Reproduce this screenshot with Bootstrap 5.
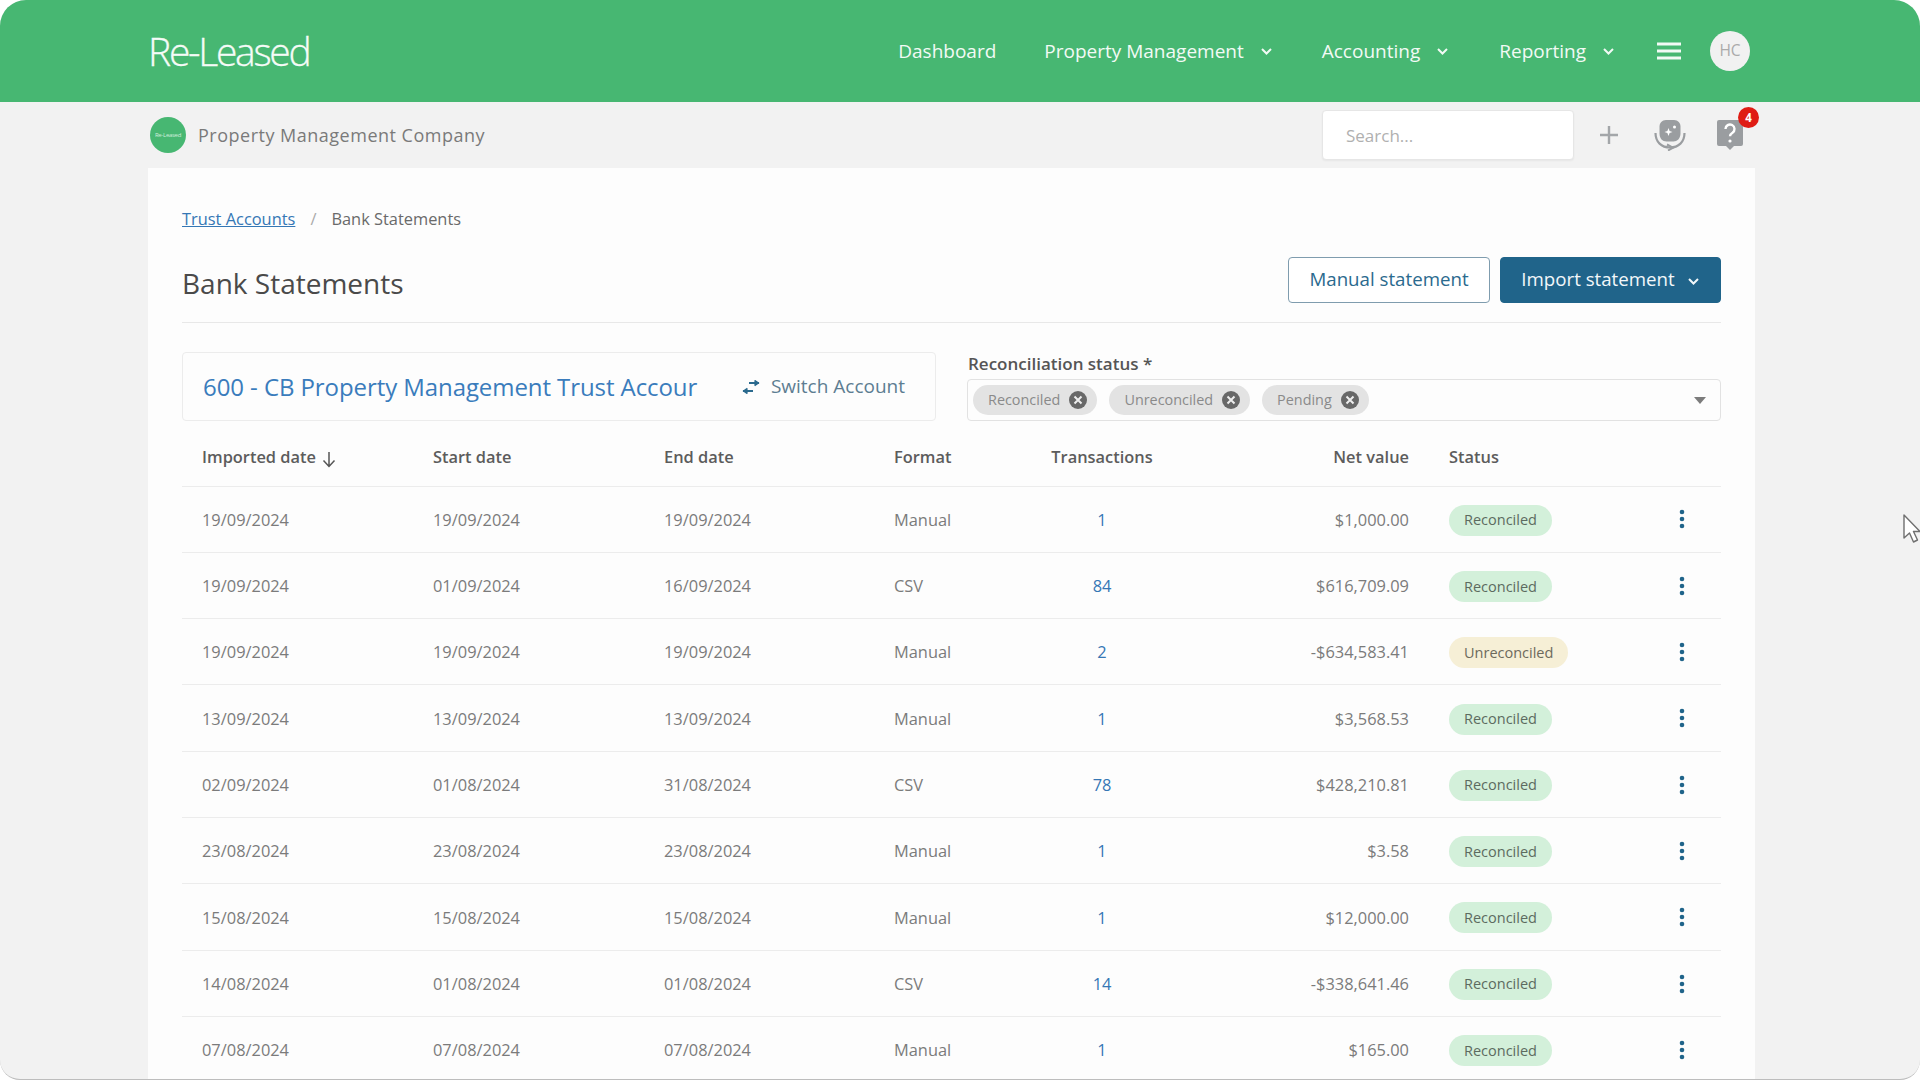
<!DOCTYPE html>
<html lang="en">
<head>
<meta charset="utf-8">
<title>Bank Statements</title>
<link href="https://cdn.jsdelivr.net/npm/bootstrap@5.3.0/dist/css/bootstrap.min.css" rel="stylesheet">
<style>
html,body{height:100%;margin:0;overflow:hidden;background:#fff;}
body{font-family:"Open Sans","Liberation Sans",sans-serif;font-size:16px;color:#777;}
.window{position:relative;height:1080px;background:#f2f2f2;border-radius:26px 26px 20px 20px;border-bottom:1px solid #bdbdbd;overflow:hidden;}
.topbar{height:102px;background:#47b772;padding:0 170px 0 148px;}
.brand{color:#f5fbf7;font-size:39px;font-weight:300;letter-spacing:-2.3px;line-height:1;margin-top:-2px;-webkit-text-stroke:.3px #f5fbf7;}
.topnav .nav-link{color:#f2faf5;font-size:19px;padding:0;display:flex;align-items:center;}
.topnav .nav-link svg{margin-left:16px;}
.nav-gap-1{margin-right:48px;}
.nav-gap-2{margin-right:49px;}
.nav-gap-3{margin-right:50px;}
.nav-gap-4{margin-right:42px;}
.nav-gap-5{margin-right:29px;}
.avatar{width:40px;height:40px;border-radius:50%;background:#f1f1f1;color:#aaa;font-size:15.5px;display:flex;align-items:center;justify-content:center;}
.subbar{height:66px;padding:0 0 0 150px;}
.org-logo{width:36px;height:36px;border-radius:50%;background:#47b772;color:#cfeedd;font-size:6px;display:flex;align-items:center;justify-content:center;letter-spacing:-.3px;margin-right:12px;}
.org-name{font-size:18px;color:#7a7a7a;letter-spacing:.5px;}
.search{width:252px;height:50px;background:#fff;border:1px solid #e6e6e6;border-radius:4px;padding:0 23px;font-size:17px;color:#aaa;box-shadow:0 1px 2px rgba(0,0,0,.05);}
.search::placeholder{color:#b0b0b0;}
.icon-plus{margin-left:24px;}
.icon-ai{margin-left:34px;}
.icon-help{position:relative;margin-left:30px;margin-right:176px;width:28px;height:32px;}
.badge-count{position:absolute;top:-12px;left:22px;width:21px;height:21px;padding:0;border-radius:50%;background:#df1c14;color:#fff;font-size:11.5px;font-weight:700;display:flex;align-items:center;justify-content:center;}
.panel{margin:0 165px 0 148px;background:#fdfdfd;padding:34px 34px 0;height:912px;}
.crumbs{--bs-breadcrumb-divider-color:#aaa;--bs-breadcrumb-item-active-color:#6a6a6a;--bs-breadcrumb-item-padding-x:15px;font-size:16.4px;margin-bottom:0;line-height:34px;}
.crumbs a{color:#3577b5;}
.head-row{margin-top:21px;height:66px;padding-bottom:20px;border-bottom:1px solid #e8e8e8;}
.head-row h1{font-size:28px;font-weight:400;color:#4a4a4a;margin:8px 0 0;}
.btn-manual{height:46px;width:202px;font-size:18.7px;color:#2b6a8e;border:1px solid #7f9cae;background:#fff;border-radius:4px;padding:0;}
.btn-import{height:46px;width:221px;margin-left:10px;font-size:18.7px;color:#f2f7fa;background:#20648a;border:1px solid #20648a;border-radius:4px;padding:0;font-weight:500;}
.btn-import svg{margin-left:12px;}
.filters{--bs-gutter-x:31px;margin-top:29px;}
.acct{height:69px;border:1px solid #ececec;border-radius:4px;padding:0 30px 0 20px;}
.acct-name{font-size:24px;color:#3a7cbc;white-space:nowrap;letter-spacing:-.08px;}
.switch{font-size:19px;color:#5d7d92;display:flex;align-items:center;gap:11px;white-space:nowrap;}
.field-label{font-size:17px;font-weight:600;color:#555;line-height:20px;margin:0 0 5px 1px;}
.select-box{height:42px;border:1px solid #e2e2e2;border-radius:4px;padding:0 14px 0 5px;gap:12px;}
.chip{height:30px;background:#e3e3e3;color:#8a8a8a;font-size:14.4px;border-radius:15px;padding:0 10px 0 15px;gap:9px;}
.chip svg{flex:none;}
.caret{margin-left:auto;width:0;height:0;border-left:6px solid transparent;border-right:6px solid transparent;border-top:7px solid #7c7c7c;}
.stmts{table-layout:fixed;width:1539px;margin:7px 0 0;--bs-table-bg:transparent;--bs-table-color:#7b7b7b;--bs-table-border-color:#ececec;font-size:16.4px;}
.stmts th{height:58px;padding:2px 0 0 20px;font-weight:600;color:#5c5c5c;vertical-align:middle;}
.stmts td{height:66.3px;padding:2px 0 0 20px;vertical-align:middle;}
.stmts .num{text-align:center;padding:2px 0 0;}
.stmts .val{text-align:right;padding:2px 20px 0 0;}
.stmts td.num{color:#3577b5;}
.pill{display:inline-flex;align-items:center;height:31px;border-radius:15.5px;padding:0 15px;font-size:14.5px;color:#5c6b60;}
.pill-ok{background:#d3f0da;}
.pill-warn{background:#f6efd6;color:#6d6a5c;}
.menu-cell{text-align:center;padding:0 0 2px 2px !important;}
.sort-arrow{margin-left:2px;}
.cursor{position:absolute;left:1903px;top:514px;}
</style>
</head>
<body>
<div class="window">
  <nav class="topbar navbar d-flex align-items-center flex-nowrap">
    <a class="brand text-decoration-none" href="#">Re-Leased</a>
    <div class="topnav d-flex align-items-center">
      <a class="nav-link nav-gap-1" href="#">Dashboard</a>
      <a class="nav-link nav-gap-2" href="#">Property Management<svg width="13" height="9" viewBox="0 0 13 9"><path d="M2 2l4.5 4.5L11 2" fill="none" stroke="#f2faf5" stroke-width="2"/></svg></a>
      <a class="nav-link nav-gap-3" href="#">Accounting<svg width="13" height="9" viewBox="0 0 13 9"><path d="M2 2l4.5 4.5L11 2" fill="none" stroke="#f2faf5" stroke-width="2"/></svg></a>
      <a class="nav-link nav-gap-4" href="#">Reporting<svg width="13" height="9" viewBox="0 0 13 9"><path d="M2 2l4.5 4.5L11 2" fill="none" stroke="#f2faf5" stroke-width="2"/></svg></a>
      <svg class="nav-gap-5" width="24" height="18" viewBox="0 0 24 18"><path d="M0 2h24M0 9h24M0 16h24" stroke="#f2faf5" stroke-width="3"/></svg>
      <div class="avatar">HC</div>
    </div>
  </nav>

  <div class="subbar d-flex align-items-center">
    <div class="org-logo">Re-Leased</div>
    <span class="org-name flex-grow-1">Property Management Company</span>
    <input class="search" type="text" placeholder="Search...">
    <svg class="icon-plus" width="22" height="22" viewBox="0 0 22 22"><path d="M11 2v18M2 11h18" stroke="#a3a6a9" stroke-width="2.4"/></svg>
    <svg class="icon-ai" width="32" height="32" viewBox="0 0 32 32">
      <path d="M12 1h8c4 0 6.500 3 6.500 6.500v7c0 5-3.500 8-7 8h-7c-4 0-7-3-7-8v-7C5.500 4 8 1 12 1z" fill="#9a9da0"/>
      <path d="M1.500 14c0 9 6 14.500 14.500 14.500 8.500 0 14.500-5.500 14.500-14.500" fill="none" stroke="#9a9da0" stroke-width="2.200"/>
      <path d="M13 25.500l6 3.200-5 2.800" fill="none" stroke="#9a9da0" stroke-width="2"/>
      <path d="M14.500 9l1.100 2.900 2.900 1.100-2.900 1.100-1.100 2.900-1.100-2.900-2.900-1.100 2.900-1.100z" fill="#fff"/>
      <circle cx="20.500" cy="8" r="1.500" fill="#fff"/>
    </svg>
    <div class="icon-help">
      <svg width="28" height="32" viewBox="0 0 28 32"><path d="M3 1h22a2 2 0 0 1 2 2v22a2 2 0 0 1-2 2h-7l-4 4-4-4H3a2 2 0 0 1-2-2V3a2 2 0 0 1 2-2z" fill="#9a9da0"/><path d="M9.500 10a4.500 4.500 0 1 1 7 3.700c-1.600 1-2.500 1.700-2.500 3.600" fill="none" stroke="#fff" stroke-width="2.400"/><circle cx="14" cy="22" r="1.600" fill="#fff"/></svg>
      <span class="badge-count">4</span>
    </div>
  </div>

  <main class="panel">
    <nav aria-label="breadcrumb">
      <ol class="breadcrumb crumbs">
        <li class="breadcrumb-item"><a href="#">Trust Accounts</a></li>
        <li class="breadcrumb-item active" aria-current="page">Bank Statements</li>
      </ol>
    </nav>

    <div class="head-row d-flex align-items-center justify-content-between">
      <h1>Bank Statements</h1>
      <div class="d-flex">
        <button class="btn btn-manual" type="button">Manual statement</button>
        <button class="btn btn-import" type="button">Import statement<svg width="13" height="9" viewBox="0 0 13 9"><path d="M2 2l4.5 4.5L11 2" fill="none" stroke="#f2f7fa" stroke-width="2"/></svg></button>
      </div>
    </div>

    <div class="row filters align-items-end">
      <div class="col-6">
        <div class="acct d-flex align-items-center justify-content-between">
          <span class="acct-name">600 - CB Property Management Trust Accour</span>
          <span class="switch"><svg width="18" height="14" viewBox="0 0 18 14"><path d="M7 3h10M12.500 .5L16 3l-3.500 2.500" fill="none" stroke="#2b6a8e" stroke-width="1.800"/><path d="M11 11H1M5.500 8.500L2 11l3.500 2.500" fill="none" stroke="#2b6a8e" stroke-width="1.800"/></svg>Switch Account</span>
        </div>
      </div>
      <div class="col-6">
        <div class="field-label">Reconciliation status *</div>
        <div class="select-box d-flex align-items-center">
          <span class="chip d-inline-flex align-items-center">Reconciled<svg width="18" height="18" viewBox="0 0 18 18"><circle cx="9" cy="9" r="9" fill="#686868"/><path d="M5.500 5.500l7 7M12.500 5.500l-7 7" stroke="#eee" stroke-width="2"/></svg></span>
          <span class="chip d-inline-flex align-items-center">Unreconciled<svg width="18" height="18" viewBox="0 0 18 18"><circle cx="9" cy="9" r="9" fill="#686868"/><path d="M5.500 5.500l7 7M12.500 5.500l-7 7" stroke="#eee" stroke-width="2"/></svg></span>
          <span class="chip d-inline-flex align-items-center">Pending<svg width="18" height="18" viewBox="0 0 18 18"><circle cx="9" cy="9" r="9" fill="#686868"/><path d="M5.500 5.500l7 7M12.500 5.500l-7 7" stroke="#eee" stroke-width="2"/></svg></span>
          <span class="caret"></span>
        </div>
      </div>
    </div>

    <table class="table stmts">
      <colgroup><col style="width:231px"><col style="width:231px"><col style="width:230px"><col style="width:148px"><col style="width:160px"><col style="width:247px"><col style="width:211px"><col style="width:81px"></colgroup>
      <thead><tr>
        <th>Imported date <svg width="14" height="17" viewBox="0 0 14 17" class="align-text-bottom sort-arrow"><path d="M7 1v14M1.500 9.500L7 15.500l5.500-6" fill="none" stroke="#555" stroke-width="1.500"/></svg></th>
        <th>Start date</th><th>End date</th><th>Format</th><th class="num">Transactions</th><th class="val">Net value</th><th>Status</th><th></th>
      </tr></thead>
      <tbody>
        <tr><td>19/09/2024</td><td>19/09/2024</td><td>19/09/2024</td><td>Manual</td><td class="num">1</td><td class="val">$1,000.00</td><td><span class="pill pill-ok">Reconciled</span></td><td class="menu-cell"><svg width="6" height="20" viewBox="0 0 6 20"><circle cx="3" cy="3" r="2.300" fill="#20648a"/><circle cx="3" cy="10" r="2.300" fill="#20648a"/><circle cx="3" cy="17" r="2.300" fill="#20648a"/></svg></td></tr>
        <tr><td>19/09/2024</td><td>01/09/2024</td><td>16/09/2024</td><td>CSV</td><td class="num">84</td><td class="val">$616,709.09</td><td><span class="pill pill-ok">Reconciled</span></td><td class="menu-cell"><svg width="6" height="20" viewBox="0 0 6 20"><circle cx="3" cy="3" r="2.300" fill="#20648a"/><circle cx="3" cy="10" r="2.300" fill="#20648a"/><circle cx="3" cy="17" r="2.300" fill="#20648a"/></svg></td></tr>
        <tr><td>19/09/2024</td><td>19/09/2024</td><td>19/09/2024</td><td>Manual</td><td class="num">2</td><td class="val">-$634,583.41</td><td><span class="pill pill-warn">Unreconciled</span></td><td class="menu-cell"><svg width="6" height="20" viewBox="0 0 6 20"><circle cx="3" cy="3" r="2.300" fill="#20648a"/><circle cx="3" cy="10" r="2.300" fill="#20648a"/><circle cx="3" cy="17" r="2.300" fill="#20648a"/></svg></td></tr>
        <tr><td>13/09/2024</td><td>13/09/2024</td><td>13/09/2024</td><td>Manual</td><td class="num">1</td><td class="val">$3,568.53</td><td><span class="pill pill-ok">Reconciled</span></td><td class="menu-cell"><svg width="6" height="20" viewBox="0 0 6 20"><circle cx="3" cy="3" r="2.300" fill="#20648a"/><circle cx="3" cy="10" r="2.300" fill="#20648a"/><circle cx="3" cy="17" r="2.300" fill="#20648a"/></svg></td></tr>
        <tr><td>02/09/2024</td><td>01/08/2024</td><td>31/08/2024</td><td>CSV</td><td class="num">78</td><td class="val">$428,210.81</td><td><span class="pill pill-ok">Reconciled</span></td><td class="menu-cell"><svg width="6" height="20" viewBox="0 0 6 20"><circle cx="3" cy="3" r="2.300" fill="#20648a"/><circle cx="3" cy="10" r="2.300" fill="#20648a"/><circle cx="3" cy="17" r="2.300" fill="#20648a"/></svg></td></tr>
        <tr><td>23/08/2024</td><td>23/08/2024</td><td>23/08/2024</td><td>Manual</td><td class="num">1</td><td class="val">$3.58</td><td><span class="pill pill-ok">Reconciled</span></td><td class="menu-cell"><svg width="6" height="20" viewBox="0 0 6 20"><circle cx="3" cy="3" r="2.300" fill="#20648a"/><circle cx="3" cy="10" r="2.300" fill="#20648a"/><circle cx="3" cy="17" r="2.300" fill="#20648a"/></svg></td></tr>
        <tr><td>15/08/2024</td><td>15/08/2024</td><td>15/08/2024</td><td>Manual</td><td class="num">1</td><td class="val">$12,000.00</td><td><span class="pill pill-ok">Reconciled</span></td><td class="menu-cell"><svg width="6" height="20" viewBox="0 0 6 20"><circle cx="3" cy="3" r="2.300" fill="#20648a"/><circle cx="3" cy="10" r="2.300" fill="#20648a"/><circle cx="3" cy="17" r="2.300" fill="#20648a"/></svg></td></tr>
        <tr><td>14/08/2024</td><td>01/08/2024</td><td>01/08/2024</td><td>CSV</td><td class="num">14</td><td class="val">-$338,641.46</td><td><span class="pill pill-ok">Reconciled</span></td><td class="menu-cell"><svg width="6" height="20" viewBox="0 0 6 20"><circle cx="3" cy="3" r="2.300" fill="#20648a"/><circle cx="3" cy="10" r="2.300" fill="#20648a"/><circle cx="3" cy="17" r="2.300" fill="#20648a"/></svg></td></tr>
        <tr><td>07/08/2024</td><td>07/08/2024</td><td>07/08/2024</td><td>Manual</td><td class="num">1</td><td class="val">$165.00</td><td><span class="pill pill-ok">Reconciled</span></td><td class="menu-cell"><svg width="6" height="20" viewBox="0 0 6 20"><circle cx="3" cy="3" r="2.300" fill="#20648a"/><circle cx="3" cy="10" r="2.300" fill="#20648a"/><circle cx="3" cy="17" r="2.300" fill="#20648a"/></svg></td></tr>
      </tbody>
    </table>
  </main>

  <svg class="cursor" width="17" height="30" viewBox="0 0 17 30"><path d="M1 1v23l5.500-5 4 9 4-2-4-8.500H17z" fill="#fff" stroke="#6f6f6f" stroke-width="1.400" stroke-linejoin="round"/></svg>
</div>
<script src="https://cdn.jsdelivr.net/npm/bootstrap@5.3.0/dist/js/bootstrap.bundle.min.js"></script>
</body>
</html>
